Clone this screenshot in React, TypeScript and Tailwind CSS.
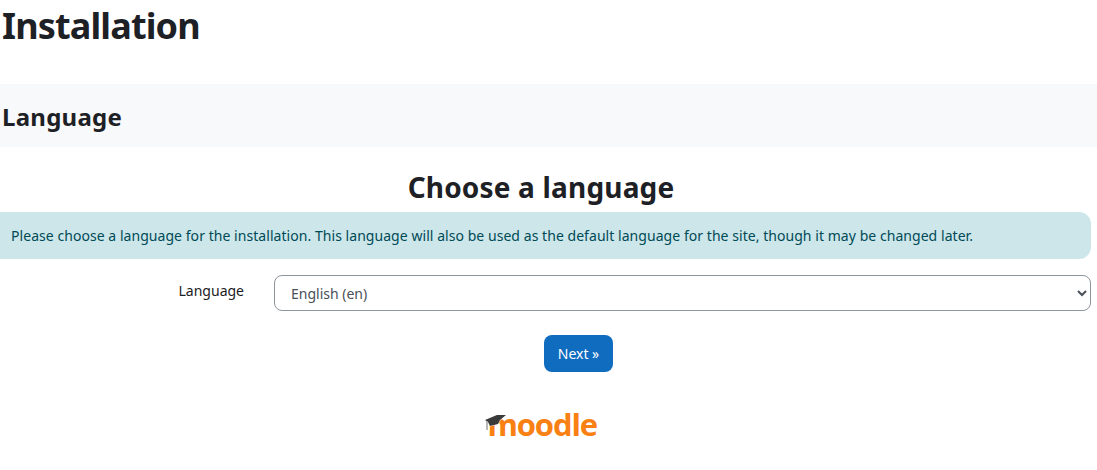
const font = "[font-family:'Noto_Sans','Open_Sans',sans-serif]";

function MoodleLogo() {
  return (
    <div className="relative flex h-[36px] w-[112px] items-center justify-end">
      <span className="text-[31px] leading-none font-bold tracking-[-1.1px] text-[#f98012] [font-family:'Open_Sans',sans-serif]">
        moodle
      </span>
      <svg className="absolute top-[5px] left-0" width="24" height="22" viewBox="0 0 24 22">
        <path d="M0 9 L12 4 L21 4 L15 9 L13 13 L5 15 L3 11 Z" fill="#3a3a3a" stroke="#ffffff" strokeWidth="1" strokeLinejoin="round" paintOrder="stroke" />
        <path d="M2 10 L2 19" stroke="#9a9a9a" strokeWidth="1.4" fill="none" />
      </svg>
    </div>
  );
}

export default function App() {
  return (
    <div className={`h-[470px] w-[1097px] overflow-hidden bg-white text-[#1d2125] ${font}`}>
      <h1 className="pl-[2px] text-[36px] leading-[52px] font-bold tracking-[-0.85px]">Installation</h1>
      <div className="mt-[32px] flex h-[63px] items-center bg-[#f8f9fa] pl-[2px]">
        <h2 className="pt-[2px] text-[24px] font-bold tracking-[0.25px]">Language</h2>
      </div>
      <div className="pr-[6px]">
        <h2 className="mt-[21px] pr-[9px] text-center text-[28px] leading-[38px] font-bold tracking-[0.18px]">Choose a language</h2>
        <div className="mt-[6px] flex h-[47px] items-center rounded-r-[12px] bg-[#cce6ea] pl-[11px] text-[14px] tracking-[0.05px] text-[#004a56]">
          Please choose a language for the installation. This language will also be used as the default language for the site, though it may be changed later.
        </div>
        <div className="mt-[16px] flex items-start">
          <label className="w-[244px] pt-[6px] text-right text-[14px] leading-5">Language</label>
          <select className="ml-[30px] h-[36px] flex-1 rounded-[8px] border border-[#8f959e] bg-white pl-[12px] text-[14px] text-[#495057]">
            <option>English (en)</option>
          </select>
        </div>
        <div className="mt-[24px] flex justify-center pl-[66px]">
          <button className="h-[37px] w-[69px] rounded-[8px] bg-[#0f6cbf] text-[14px] text-white">Next »</button>
        </div>
      </div>
      <div className="mt-[34px] flex justify-center pr-[15px]">
        <MoodleLogo />
      </div>
    </div>
  );
}
